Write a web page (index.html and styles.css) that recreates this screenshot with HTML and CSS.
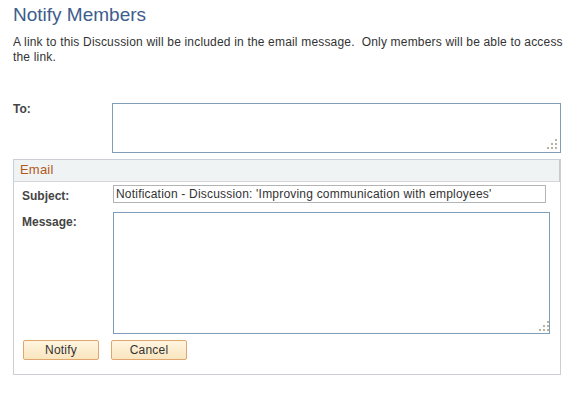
FILE: index.html
```html
<!DOCTYPE html>
<html>
<head>
<meta charset="utf-8">
<link rel="stylesheet" href="styles.css">
</head>
<body>
<div class="page">
  <h1 class="title">Notify Members</h1>
  <p class="desc">A link to this Discussion will be included in the email message.&nbsp; Only members will be able to access the link.</p>
  <div class="to-row">
    <label class="lbl lbl-to">To:</label>
    <div class="ta-wrap">
      <textarea class="ta ta-to"></textarea>
      <svg class="grip" width="10" height="10" viewBox="0 0 10 10"><rect x="8" y="0" width="2" height="2"/><rect x="4" y="4" width="2" height="2"/><rect x="8" y="4" width="2" height="2"/><rect x="0" y="8" width="2" height="2"/><rect x="4" y="8" width="2" height="2"/><rect x="8" y="8" width="2" height="2"/></svg>
    </div>
  </div>
  <div class="group">
    <div class="group-head">Email</div>
    <div class="group-body">
      <div class="row row-subject">
        <label class="lbl lbl-subject">Subject:</label>
        <input class="inp" type="text" value="Notification - Discussion: 'Improving communication with employees'">
      </div>
      <div class="row row-message">
        <label class="lbl lbl-message">Message:</label>
        <div class="ta-wrap">
          <textarea class="ta ta-msg"></textarea>
          <svg class="grip grip-msg" width="10" height="10" viewBox="0 0 10 10"><rect x="8" y="0" width="2" height="2"/><rect x="4" y="4" width="2" height="2"/><rect x="8" y="4" width="2" height="2"/><rect x="0" y="8" width="2" height="2"/><rect x="4" y="8" width="2" height="2"/><rect x="8" y="8" width="2" height="2"/></svg>
        </div>
      </div>
      <div class="buttons">
        <button class="btn">Notify</button>
        <button class="btn">Cancel</button>
      </div>
    </div>
  </div>
</div>
</body>
</html>
```
FILE: styles.css
```css
html, body {
  margin: 0;
  padding: 0;
  background: #ffffff;
}
body {
  font-family: "Liberation Sans", Arial, sans-serif;
  color: #333333;
}
.page {
  padding: 0 13px;
  width: 548px;
}
.title {
  margin: 0;
  padding-top: 4px;
  font-size: 19px;
  line-height: 22px;
  font-weight: normal;
  color: #3d5d8c;
}
.desc {
  margin: 9px -13px 0 0;
  font-size: 12px;
  line-height: 15px;
  letter-spacing: 0.18px;
  color: #333333;
}
.to-row {
  display: grid;
  grid-template-columns: 99px 449px;
  margin-top: 38px;
}
.lbl {
  font-size: 12px;
  font-weight: bold;
  color: #444444;
}
.lbl-to {
  line-height: 12px;
}
.ta-wrap {
  position: relative;
}
.ta {
  display: block;
  box-sizing: border-box;
  margin: 0;
  padding: 2px;
  border: 1px solid #7f9cb8;
  background: #ffffff;
  resize: none;
  font-family: "Liberation Sans", Arial, sans-serif;
  font-size: 12px;
  outline: none;
}
.ta-to {
  width: 449px;
  height: 50px;
}
.ta-msg {
  width: 437px;
  height: 122px;
}
.grip {
  position: absolute;
  right: 4px;
  bottom: 4px;
  fill: #b8b39d;
}
.grip-msg {
  right: 3px;
  bottom: 3px;
}
.group {
  margin-top: 6px;
  border: 1px solid #cbced4;
  height: 214px;
}
.group-head {
  height: 21px;
  line-height: 20px;
  padding-left: 6px;
  background: #eff3f4;
  border-bottom: 1px solid #d4d7db;
  border-right: 1px solid #c6cace;
  font-size: 13px;
  letter-spacing: 0.2px;
  color: #b3591a;
}
.group-body {
  padding: 3px 8px 0 8px;
}
.row {
  display: grid;
  grid-template-columns: 91px auto;
  align-items: start;
}
.row-message {
  margin-top: 9px;
}
.lbl-subject {
  line-height: 14px;
  padding-top: 4px;
}
.lbl-message {
  line-height: 14px;
  padding-top: 3px;
}
.inp {
  box-sizing: border-box;
  width: 433px;
  height: 18px;
  margin: 0;
  padding: 0 2px;
  border: 1px solid #b4b4b4;
  font-family: "Liberation Sans", Arial, sans-serif;
  font-size: 12px;
  letter-spacing: 0.2px;
  color: #333333;
  outline: none;
}
.buttons {
  display: flex;
  gap: 12px;
  margin-top: 6px;
  padding-left: 1px;
}
.btn {
  box-sizing: border-box;
  width: 76px;
  height: 20px;
  margin: 0;
  padding: 0;
  border: 1px solid #dfa66e;
  border-radius: 2px;
  background: linear-gradient(#fff5df, #fae5bf);
  font-family: "Liberation Sans", Arial, sans-serif;
  font-size: 12px;
  letter-spacing: 0.2px;
  color: #333333;
}
```
